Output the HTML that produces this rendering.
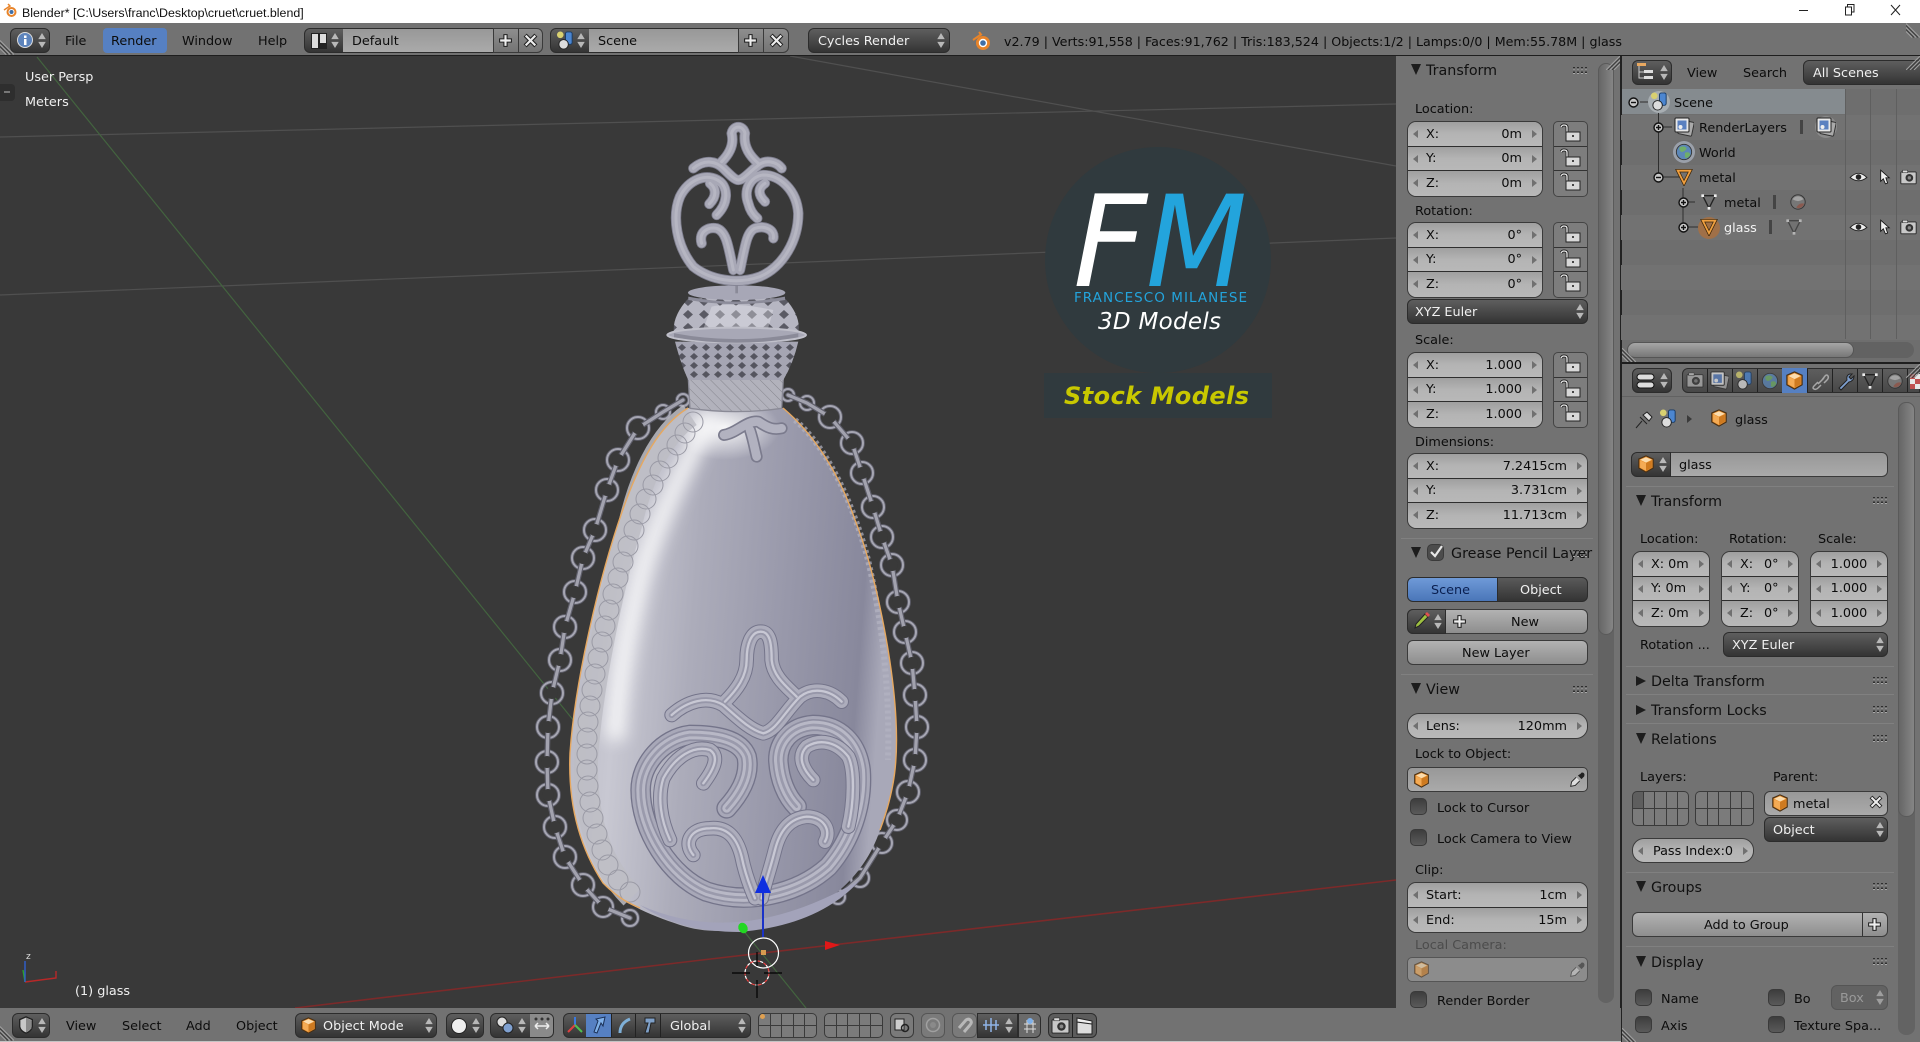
<!DOCTYPE html>
<html><head><meta charset="utf-8"><style>
html,body{margin:0;padding:0}
body{position:relative;width:1920px;height:1042px;overflow:hidden;background:#fff;font:12.8px/16px "DejaVu Sans","Liberation Sans",sans-serif;color:#0c0c0c}
div,svg,span.t{box-sizing:border-box}
.a{position:absolute}
.t{position:absolute;white-space:nowrap;line-height:16px;margin-top:1px}
.w{color:#f0f0f0}.h{font-size:14.3px;color:#111}
.hd{position:absolute;background:#727272}
.dk{position:absolute;height:25px;border:1px solid #2c2c2c;border-radius:6px;background:linear-gradient(#5e5e5e,#343434)}
.fl{position:absolute;height:25px;background:linear-gradient(#989898,#aaaaaa);border-top:1px solid #2c2c2c;border-bottom:1px solid #2c2c2c}
.bt{position:absolute;height:25px;border:1px solid #3a3a3a;border-radius:6px;background:linear-gradient(#b2b2b2,#8e8e8e)}
.num{position:absolute;border:1px solid #3a3a3a;border-radius:9px;overflow:hidden}
.r{position:relative;display:flex;justify-content:space-between;align-items:center;height:24.5px;padding:0 20px 0 18px;background:linear-gradient(#9f9f9f,#b4b4b4 50%,#b8b8b8);border-bottom:1px solid #2e2e2e}
.r span{position:relative;top:1px}
.r:last-child{border-bottom:0}
.r::before,.r::after{content:"";position:absolute;top:8px;border:4px solid transparent}
.r::before{left:5px;border-right:5px solid #707070;border-left:0}
.r::after{right:5px;border-left:5px solid #707070;border-right:0}
.p{padding:0 14px 0 18px;justify-content:flex-start}
.c{justify-content:center;padding:0}
.lk{position:absolute;left:1553px;width:35px;border:1px solid #444;border-radius:5px;overflow:hidden;background:#7d7d7d}
.lk div{height:24.5px;border-bottom:1px solid #333;position:relative}
.lk div:last-child{border:0}
.lk svg{position:absolute;left:6px;top:-1px;width:22px;height:22px}
.ck{position:absolute;width:17px;height:17px;border:1px solid #3a3a3a;border-radius:5px;background:linear-gradient(#3d3d3d,#5a5a5a)}
.d{position:absolute;width:0;height:0;border-left:5px solid transparent;border-right:5px solid transparent;border-top:11px solid #1c1c1c}
.rt{position:absolute;width:0;height:0;border-top:5px solid transparent;border-bottom:5px solid transparent;border-left:10px solid #1c1c1c}
.sep{position:absolute;height:1px;background:#5c5c5c;border-bottom:1px solid #808080}
.row{position:absolute;left:1621px;width:299px;height:25px}
.g{position:absolute;display:grid;grid-template-columns:repeat(5,1fr);grid-template-rows:1fr 1fr;border:1px solid #3a3a3a;border-radius:5px;overflow:hidden;background:#3a3a3a;gap:1px}
.g i{background:#7b7b7b;display:block}
svg.i{position:absolute;overflow:visible}
</style></head><body>
<svg width="0" height="0" style="position:absolute"><defs>
<symbol id="ud" viewBox="0 0 8 16"><path d="M4 0L8 6.5H0Z M4 16L8 9.5H0Z" fill="#b8b8b8"/></symbol>
<symbol id="lock" viewBox="0 0 22 22"><path d="M7 13V6.500Q7 4 4 4Q2 4 1 6" fill="none" stroke="#222" stroke-width="3"/><path d="M7 13V6.500Q7 4 4 4Q2 4 1 6" fill="none" stroke="#e8e8e8" stroke-width="1.300"/><rect x="6" y="11" width="14" height="9" fill="#d8d8d8" stroke="#222"/><rect x="12" y="14" width="2" height="2" fill="#444"/></symbol>
<symbol id="cube" viewBox="0 0 20 20"><path d="M10 1L18 4.500V14.500L10 19L2 14.500V4.500Z" fill="#e98f2c" stroke="#4a3014" stroke-width="1.300"/><path d="M10 2.500L16.500 5.300L10 8.500L3.500 5.300Z" fill="#fbdcae"/><path d="M10 9V17.500L16.500 14V6Z" fill="#ce7a20"/><path d="M3.500 6L10 9V17.500L3.500 14Z" fill="#f4ab55"/></symbol>
<symbol id="sc" viewBox="0 0 20 20"><circle cx="4.500" cy="4" r="3.500" fill="#d8d070"/><rect x="10" y="1" width="7" height="13" rx="2" fill="#4c86d0" stroke="#163a66"/><circle cx="8" cy="14" r="5" fill="#dcdcdc" stroke="#222"/></symbol>
<symbol id="rl" viewBox="0 0 20 20"><rect x="5" y="4" width="14" height="14" rx="1" fill="#aaa" stroke="#333" transform="rotate(12 12 11)"/><rect x="1" y="1" width="14" height="14" rx="1" fill="#e8e8e8" stroke="#222"/><rect x="3.500" y="3.500" width="9" height="9" fill="#5a80c0"/><circle cx="6.500" cy="10" r="2" fill="#eee"/></symbol>
<symbol id="world" viewBox="0 0 20 20"><circle cx="10" cy="10" r="8.500" fill="#5c87b8" stroke="#333"/><path d="M5 5Q10 2 13 6Q11 10 7 10Q4 8 5 5ZM11 11Q16 9 17 13Q14 18 11 16Z" fill="#6fae6a"/></symbol>
<symbol id="otri" viewBox="0 0 20 20"><path d="M3 3H17L10 17Z" fill="none" stroke="#3a2408" stroke-width="3.600"/><path d="M3 3H17L10 17Z" fill="none" stroke="#f0a040" stroke-width="2"/></symbol>
<symbol id="mesh" viewBox="0 0 20 20"><path d="M3 3H17L10 17Z" fill="none" stroke="#222" stroke-width="1.500"/><rect x="1.500" y="1.500" width="3" height="3" fill="#eee"/><rect x="15.500" y="1.500" width="3" height="3" fill="#eee"/><rect x="8.500" y="15.500" width="3" height="3" fill="#eee"/></symbol>
<symbol id="ball" viewBox="0 0 20 20"><circle cx="10" cy="10" r="8" fill="#777" stroke="#333"/><path d="M4 7A7 7 0 0 1 16 7Q10 11 4 7Z" fill="#a3a3a3"/><path d="M8 16Q12 10 17 12Q15 17 10 17Z" fill="#8a5a50"/></symbol>
<symbol id="eye" viewBox="0 0 20 14"><path d="M1 7Q10 -2 19 7Q10 14 1 7Z" fill="#eee" stroke="#222"/><circle cx="10" cy="6.500" r="3" fill="#222"/></symbol>
<symbol id="cur" viewBox="0 0 14 18"><path d="M2 1L12 10H8L10 16L7.500 17L5 11L2 14Z" fill="#f0f0f0" stroke="#111"/></symbol>
<symbol id="cam" viewBox="0 0 20 18"><rect x="1" y="3" width="18" height="14" rx="1" fill="#c8c8c8" stroke="#222"/><rect x="3" y="1" width="6" height="3" fill="#ddd" stroke="#222" stroke-width=".6"/><circle cx="11" cy="10" r="4.500" fill="#333"/><circle cx="11" cy="10" r="2" fill="#888"/></symbol>
<symbol id="plus" viewBox="0 0 14 14"><path d="M7 1V13M1 7H13" stroke="#222" stroke-width="4"/><path d="M7 2V12M2 7H12" stroke="#eee" stroke-width="2"/></symbol>
<symbol id="x" viewBox="0 0 14 14"><path d="M2 2L12 12M12 2L2 12" stroke="#222" stroke-width="4"/><path d="M2.500 2.500L11.500 11.500M11.500 2.500L2.500 11.500" stroke="#eee" stroke-width="2"/></symbol>
<symbol id="dots" viewBox="0 0 15 8"><path d="M0 1H15M0 5.500H15" stroke="#2e2e2e" stroke-width="2" stroke-dasharray="2 2"/><path d="M0 2H15M0 6.500H15" stroke="#a8a8a8" stroke-width="1" stroke-dasharray="2 2"/></symbol>
<symbol id="hatch" viewBox="0 0 14 14"><path d="M0 4L10 14M0 8L6 14M0 0L14 14" stroke="#a0a0a0" stroke-width="1"/><path d="M0 2L12 14M0 6L8 14" stroke="#3c3c3c" stroke-width="1"/></symbol>
<symbol id="drop" viewBox="0 0 20 20"><path d="M9 7L4 12L3 17L8 16L13 11" fill="#ddd" stroke="#222"/><path d="M11 5L15 9L18 6Q19 3 17 2Q15 1 14 3Z" fill="#222"/></symbol>
<symbol id="ed" viewBox="0 0 20 20"><path d="M10 1L17 4V12Q16 17 10 19Q4 17 3 12V4Z" fill="#c8c8c8" stroke="#222" stroke-width="1.500"/><path d="M10 2L10 18.500L16 14V5Z" fill="#8a8a8a"/></symbol>
<pattern id="lat1" width="16" height="13" patternUnits="userSpaceOnUse" patternTransform="scale(3)"><rect width="16" height="13" fill="#b6b6c2"/><path d="M8 2L13 6.500L8 11L3 6.500Z" fill="#5a5a64"/></pattern>
<pattern id="lat2" width="12" height="9" patternUnits="userSpaceOnUse" patternTransform="scale(3)"><rect width="12" height="9" fill="#a5a5b3"/><path d="M6 1L10 4.500L6 8L2 4.500Z" fill="#55555f"/></pattern>
<pattern id="lat3" width="7" height="7" patternUnits="userSpaceOnUse" patternTransform="rotate(45) scale(3)"><rect width="7" height="7" fill="#b2b2bc"/><path d="M0 0H7" stroke="#86868f"/></pattern>
<linearGradient id="body" x1="0" x2="1" y1="0" y2=".12"><stop offset="0" stop-color="#b5b5c0"/><stop offset=".2" stop-color="#c8c8d2"/><stop offset=".42" stop-color="#acacba"/><stop offset=".7" stop-color="#9898aa"/><stop offset=".93" stop-color="#88889c"/><stop offset="1" stop-color="#a8a8b8"/></linearGradient>
<radialGradient id="sh"><stop offset="0" stop-color="#fff" stop-opacity=".9"/><stop offset="1" stop-color="#fff" stop-opacity="0"/></radialGradient>
<filter id="b8" x="-50%" y="-20%" width="200%" height="140%"><feGaussianBlur stdDeviation="8"/></filter>
<g id="chL"><circle cx="683" cy="400" r="6"/><circle cx="663" cy="412" r="7"/><circle cx="638" cy="428" r="11"/><circle cx="618" cy="460" r="11"/><circle cx="607" cy="490" r="11"/><circle cx="595" cy="530" r="11"/><circle cx="583" cy="558" r="11"/><circle cx="575" cy="592" r="11"/><circle cx="565" cy="627" r="11"/><circle cx="560" cy="660" r="11"/><circle cx="552" cy="693" r="11"/><circle cx="548" cy="727" r="11"/><circle cx="547" cy="762" r="11"/><circle cx="548" cy="795" r="11"/><circle cx="555" cy="827" r="11"/><circle cx="565" cy="857" r="11"/><circle cx="583" cy="885" r="11"/><circle cx="603" cy="907" r="10"/><circle cx="630" cy="918" r="8"/></g>
<g id="chR"><circle cx="788" cy="395" r="6"/><circle cx="807" cy="403" r="7"/><circle cx="830" cy="417" r="11"/><circle cx="852" cy="443" r="11"/><circle cx="862" cy="473" r="11"/><circle cx="873" cy="507" r="11"/><circle cx="882" cy="537" r="11"/><circle cx="892" cy="565" r="11"/><circle cx="898" cy="602" r="11"/><circle cx="905" cy="632" r="11"/><circle cx="912" cy="663" r="11"/><circle cx="915" cy="695" r="11"/><circle cx="917" cy="727" r="11"/><circle cx="915" cy="760" r="11"/><circle cx="908" cy="792" r="11"/><circle cx="897" cy="820" r="10"/><circle cx="882" cy="843" r="10"/><circle cx="860" cy="878" r="9"/><circle cx="838" cy="897" r="7"/></g>
<g id="inn"><circle cx="638" cy="428" r="6"/><circle cx="618" cy="460" r="6"/><circle cx="607" cy="490" r="6"/><circle cx="595" cy="530" r="6"/><circle cx="583" cy="558" r="6"/><circle cx="575" cy="592" r="6"/><circle cx="565" cy="627" r="6"/><circle cx="560" cy="660" r="6"/><circle cx="552" cy="693" r="6"/><circle cx="548" cy="727" r="6"/><circle cx="547" cy="762" r="6"/><circle cx="548" cy="795" r="6"/><circle cx="555" cy="827" r="6"/><circle cx="565" cy="857" r="6"/><circle cx="583" cy="885" r="6"/><circle cx="603" cy="907" r="6"/><circle cx="830" cy="417" r="6"/><circle cx="852" cy="443" r="6"/><circle cx="862" cy="473" r="6"/><circle cx="873" cy="507" r="6"/><circle cx="882" cy="537" r="6"/><circle cx="892" cy="565" r="6"/><circle cx="898" cy="602" r="6"/><circle cx="905" cy="632" r="6"/><circle cx="912" cy="663" r="6"/><circle cx="915" cy="695" r="6"/><circle cx="917" cy="727" r="6"/><circle cx="915" cy="760" r="6"/><circle cx="908" cy="792" r="6"/><circle cx="897" cy="820" r="6"/><circle cx="882" cy="843" r="6"/></g>
<g id="orn"><path d="M615 545C650 510 680 470 680 420C680 370 695 335 722 335C750 335 755 370 755 420C760 470 800 500 830 530"/><path d="M455 585C500 545 560 525 610 555C650 590 690 630 730 640C770 630 790 580 840 530C880 500 930 510 965 545"/><path d="M520 1005C490 970 510 925 570 925C620 920 650 950 665 1010C675 1060 690 1100 705 1135"/><path d="M915 965C935 930 910 890 860 890C810 895 780 930 765 990C750 1050 735 1090 725 1135"/><path d="M550 790C580 750 600 710 570 690C520 675 465 710 430 775C412 830 422 900 450 960"/><path d="M880 780C850 750 830 710 860 680C900 655 950 665 985 710C1005 750 1002 850 985 920"/></g>
<path id="ring" d="M620 865C670 810 690 760 680 710C660 655 580 645 510 645C430 655 362 730 362 810C362 930 450 1070 560 1115C680 1155 830 1125 925 1040C990 965 1030 860 1022 750C1012 670 960 615 880 615C810 620 775 670 775 720C778 780 800 830 830 860"/>
<g id="st"><path d="M590 345C625 310 625 265 600 245C560 215 505 240 480 290C455 350 470 440 520 500C570 540 650 555 720 530C790 500 835 420 835 340C830 270 780 225 730 225C690 230 670 270 685 310C690 330 700 345 712 355"/><path d="M568 312C590 290 590 265 570 250"/><path d="M735 305C715 285 712 265 735 250"/><path d="M605 185C640 150 640 120 635 100C640 75 670 75 675 100C670 130 680 160 715 190"/><path d="M520 205C555 175 590 185 610 205C630 225 645 240 655 240C670 240 690 215 710 200C735 175 770 185 785 205"/><path d="M545 430C535 395 565 380 590 385C620 395 625 440 640 510"/><path d="M760 415C765 390 735 375 705 385C680 395 675 440 660 510"/></g>
</defs></svg>

<!-- title bar -->
<svg class="i" style="left:3px;top:3px" width="15" height="15" viewBox="0 0 15 15"><circle cx="8.500" cy="9" r="5" fill="#e8842a"/><circle cx="8.500" cy="9" r="2.500" fill="#3f6fa8" stroke="#fff"/><path d="M1 7L7 3L5 1" fill="none" stroke="#e8842a" stroke-width="1.500"/></svg>
<span class="t" style="left:22px;top:4px;font:12.400px/16px 'Liberation Sans',sans-serif;color:#111">Blender* [C:\Users\franc\Desktop\cruet\cruet.blend]</span>
<div class="a" style="left:1799px;top:10px;width:9px;height:1px;background:#222"></div>
<svg class="i" style="left:1845px;top:4px" width="10" height="12"><rect x=".5" y="3" width="6" height="8" fill="#fff" stroke="#222"/><path d="M2.500 3V.5H9V8H6.500" fill="none" stroke="#222"/></svg>
<svg class="i" style="left:1890px;top:5px" width="11" height="11"><path d="M1 0L10 10M10 0L1 10" stroke="#222"/></svg>

<!-- viewport -->
<div class="a" style="left:0;top:55px;width:1396px;height:953px;background:#393939"></div>
<svg class="a" style="left:0;top:0" width="1396" height="1008" viewBox="0 0 1396 1008">
<g fill="none" stroke-width="1.200">
<path d="M0 137L1396 104" stroke="#505050"/><path d="M0 295L1396 238" stroke="#505050"/><path d="M790 56L1396 166" stroke="#505050"/>
<path d="M37 57L806 1008" stroke="#43643f"/><path d="M295 1008L702 960L1396 880" stroke="#7c2a2a" stroke-width="1.600"/>
</g>
<!-- chains -->
<use href="#chL" fill="none" stroke="#5e5e6a" stroke-width="3.800"/><use href="#chR" fill="none" stroke="#5e5e6a" stroke-width="3.800"/>
<use href="#chL" fill="none" stroke="#a6a6b2" stroke-width="2"/><use href="#chR" fill="none" stroke="#a6a6b2" stroke-width="2"/>
<g fill="none" stroke-linecap="round">
<path d="M683 400L663 412L638 428L618 460L607 490L595 530L583 558L575 592L565 627L560 660L552 693L548 727L547 762L548 795L555 827L565 857L583 885L603 907L630 918" stroke="#5e5e6a" stroke-width="5.500"/>
<path d="M788 395L807 403L830 417L852 443L862 473L873 507L882 537L892 565L898 602L905 632L912 663L915 695L917 727L915 760L908 792L897 820L882 843L860 878L838 897" stroke="#5e5e6a" stroke-width="5.500"/>
<path d="M683 400L663 412L638 428L618 460L607 490L595 530L583 558L575 592L565 627L560 660L552 693L548 727L547 762L548 795L555 827L565 857L583 885L603 907L630 918" stroke="#a2a2ae" stroke-width="3.200"/>
<path d="M788 395L807 403L830 417L852 443L862 473L873 507L882 537L892 565L898 602L905 632L912 663L915 695L917 727L915 760L908 792L897 820L882 843L860 878L838 897" stroke="#a2a2ae" stroke-width="3.200"/>
</g>
<use href="#inn" fill="#393939"/>
<!-- body -->
<path d="M688 408C660 425 640 460 622 512C600 575 575 680 570 753C568 800 578 845 603 883C625 905 650 915 680 925C710 935 745 932 787 920C830 905 865 875 880 830C895 790 898 760 896 720C893 660 875 570 855 520C840 475 815 435 783 408Z" fill="url(#body)"/>
<path d="M712 415C680 470 650 540 640 580C628 630 618 680 615 740" fill="none" stroke="#fff" stroke-width="20" opacity=".8" filter="url(#b8)"/>
<ellipse cx="725" cy="428" rx="55" ry="32" fill="url(#sh)"/>
<path d="M640 905Q740 950 860 880Q820 925 740 932Q680 932 640 905Z" fill="#a3a3ba"/>
<path d="M690 415C660 435 640 480 630 525C612 585 590 690 586 760C585 810 595 860 632 897" fill="none" stroke="#bdbdc4" stroke-width="24" opacity=".85"/>
<g fill="none" stroke="#9a9aa5" stroke-width="1">
<circle cx="693" cy="422" r="10"/><circle cx="685" cy="433" r="10"/><circle cx="677" cy="445" r="10"/><circle cx="668" cy="458" r="10"/><circle cx="660" cy="471" r="10"/><circle cx="653" cy="485" r="10"/><circle cx="646" cy="499" r="10"/><circle cx="640" cy="514" r="10"/><circle cx="634" cy="530" r="10"/><circle cx="628" cy="546" r="10"/><circle cx="623" cy="562" r="10"/><circle cx="618" cy="578" r="10"/><circle cx="613" cy="594" r="10"/><circle cx="609" cy="610" r="10"/><circle cx="605" cy="626" r="10"/><circle cx="602" cy="642" r="10"/><circle cx="598" cy="658" r="10"/><circle cx="595" cy="674" r="10"/><circle cx="592" cy="690" r="10"/><circle cx="590" cy="706" r="10"/><circle cx="588" cy="722" r="10"/><circle cx="587" cy="738" r="10"/><circle cx="587" cy="754" r="10"/><circle cx="587" cy="770" r="10"/><circle cx="588" cy="786" r="10"/><circle cx="590" cy="802" r="10"/><circle cx="593" cy="818" r="10"/><circle cx="597" cy="834" r="10"/><circle cx="602" cy="850" r="10"/><circle cx="608" cy="865" r="10"/><circle cx="618" cy="880" r="10"/><circle cx="630" cy="892" r="10"/>
</g>
<path d="M795 420C830 450 855 510 868 560C882 620 890 690 888 760" fill="none" stroke="#b4b4c2" stroke-width="6" stroke-dasharray="3 3" opacity=".7"/>
<path d="M688 408C660 425 640 460 622 512C600 575 575 680 570 753C568 800 578 845 603 883C615 895 625 902 640 908" fill="none" stroke="#e6a860" stroke-width="1.400"/>
<path d="M783 408C815 435 840 475 855 520C875 570 893 660 896 720C898 760 895 790 880 830" fill="none" stroke="#e6a860" stroke-width="1.400"/>
<!-- ornament -->
<g transform="translate(520 520) scale(.3333)" fill="none" stroke-linecap="round" stroke-linejoin="round">
<use href="#ring" stroke="#74748a" stroke-width="62"/><use href="#ring" stroke="#a8a8b8" stroke-width="54"/><use href="#ring" stroke="#8f8fa2" stroke-width="36"/><use href="#ring" stroke="#b8b8c6" stroke-width="26"/><use href="#ring" stroke="#9a9aac" stroke-width="8"/>
<use href="#orn" stroke="#74748a" stroke-width="44"/><use href="#orn" stroke="#adadbc" stroke-width="38"/><use href="#orn" stroke="#9797a9" stroke-width="18"/><use href="#orn" stroke="#c8c8d4" stroke-width="7"/>
</g>
<!-- neck collar -->
<g transform="translate(520 100) scale(.3333)">
<path d="M505 835H790L785 925Q650 945 510 925Z" fill="url(#lat3)" stroke="#8a8a96" stroke-width="4"/>
<path d="M465 725Q485 800 505 840H790Q820 790 835 725Z" fill="url(#lat2)"/>
<path d="M505 595Q455 650 462 700H835Q845 650 795 595Z" fill="url(#lat1)"/>
<path d="M575 620Q640 605 760 630L740 700L545 700Z" fill="#f0f0f6" opacity=".35"/>
<ellipse cx="650" cy="705" rx="208" ry="22" fill="#a8a8b6" stroke="#c0c0ca" stroke-width="6"/>
<path d="M462 712Q650 745 835 712L835 700Q650 735 462 700Z" fill="#8a8a98"/>
<ellipse cx="650" cy="578" rx="146" ry="22" fill="#a7a7b6"/>
<path d="M505 590Q650 620 795 590V600Q650 625 505 600Z" fill="#8c8c9a"/>
<rect x="646" y="545" width="8" height="35" fill="#8a8a98"/>
</g>
<!-- stopper -->
<g transform="translate(520 100) scale(.3333)" fill="none" stroke-linecap="round" stroke-linejoin="round">
<use href="#st" stroke="#7e7e8e" stroke-width="31"/><use href="#st" stroke="#a8a8b6" stroke-width="26"/><use href="#st" stroke="#b6b6c2" stroke-width="9"/>
</g>
<!-- neck ornament on body -->
<g transform="translate(520 100) scale(.3333)" fill="none" stroke-linecap="round" stroke-linejoin="round">
<path d="M612 1005C650 1000 680 960 715 965C745 985 760 990 785 985M690 990C700 1020 705 1050 710 1070" stroke="#7b7b8d" stroke-width="36"/>
<path d="M612 1005C650 1000 680 960 715 965C745 985 760 990 785 985M690 990C700 1020 705 1050 710 1070" stroke="#b2b2c0" stroke-width="26"/>
</g>
<!-- gizmo -->
<path d="M763 937V890" stroke="#1a32c8" stroke-width="2"/><path d="M763 875L771 893H755Z" fill="#0f2ee0"/>
<path d="M825 941L840 945L825 950Z" fill="#e01818"/>
<ellipse cx="743" cy="928" rx="4.500" ry="5.500" fill="#22d822" transform="rotate(-30 743 928)"/>
<circle cx="763.500" cy="953" r="15" fill="none" stroke="#fff" stroke-width="1.200"/><rect x="761" y="950" width="5" height="5" fill="#d89a50"/>
<circle cx="757" cy="973" r="12" fill="none" stroke="#e44" stroke-width="1.200" stroke-dasharray="4 3"/>
<circle cx="757" cy="973" r="12" fill="none" stroke="#fff" stroke-width="1.200" stroke-dasharray="3 4" stroke-dashoffset="3.500"/>
<path d="M732 973H750M764 973H782M757 952V966M757 980V998" stroke="#000" stroke-width="1.200"/>
<!-- mini axis -->
<path d="M25 982L56 978V971" fill="none" stroke="#b82828" stroke-width="1.400"/><path d="M25 982L23 970" stroke="#2ca02c" stroke-width="1.400"/><path d="M25 982V961" stroke="#3060d0" stroke-width="1.400"/>
<!-- logo -->
<circle cx="1158" cy="260" r="113" fill="#303a3e"/>
<rect x="1044" y="373" width="228" height="45" fill="#303a3e"/>
<text x="1073" y="286" font-family="DejaVu Sans" font-style="italic" font-size="127" fill="#fff" textLength="74" lengthAdjust="spacingAndGlyphs">F</text>
<text x="1146" y="286" font-family="DejaVu Sans" font-style="italic" font-size="127" fill="#23a4dc" textLength="101" lengthAdjust="spacingAndGlyphs">M</text>
<text x="1074" y="302" font-family="DejaVu Sans" font-size="13.500" fill="#23a4dc" textLength="173">FRANCESCO MILANESE</text>
<text x="1098" y="329" font-family="DejaVu Sans" font-style="italic" font-size="23" fill="#fff" textLength="123">3D Models</text>
<text x="1064" y="404" font-family="DejaVu Sans" font-style="italic" font-weight="bold" font-size="24" fill="#c8c800" textLength="185">Stock Models</text>
</svg>
<span class="t w" style="left:25px;top:69px">User Persp</span>
<span class="t w" style="left:25px;top:94px">Meters</span>
<span class="t w" style="left:75px;top:983px">(1) glass</span>
<span class="t" style="left:26px;top:948px;font-size:9px;color:#ddd">z</span>
<div class="a" style="left:0;top:84px;width:15px;height:17px;background:#2e2e2e;border-radius:0 4px 4px 0"></div>
<div class="a" style="left:4px;top:91px;width:6px;height:2px;background:#777"></div>

<!-- top header -->
<div class="hd" style="left:0;top:23px;width:1920px;height:32px"></div>
<div class="a" style="left:0;top:55px;width:1920px;height:1px;background:#1e1e1e"></div>
<svg class="i" style="left:0;top:40px" width="14" height="15"><use href="#hatch"/></svg>
<svg class="i" style="left:1906px;top:23px" width="14" height="15"><use href="#hatch"/></svg>
<div class="dk" style="left:10px;top:28px;width:40px"></div>
<svg class="i" style="left:16px;top:31px" width="18" height="18"><circle cx="9" cy="9" r="7.500" fill="#5d84bc" stroke="#ddd"/><rect x="8" y="8" width="2.500" height="6" fill="#fff"/><rect x="8" y="4.500" width="2.500" height="2.500" fill="#fff"/></svg>
<svg class="i" style="left:38px;top:33px" width="8" height="15"><use href="#ud"/></svg>
<span class="t" style="left:65px;top:33px">File</span>
<div class="a" style="left:103px;top:28px;width:64px;height:25px;background:#5680c2;border-radius:4px"></div>
<span class="t" style="left:111px;top:33px">Render</span>
<span class="t" style="left:182px;top:33px">Window</span>
<span class="t" style="left:258px;top:33px">Help</span>

<div class="dk" style="left:304px;top:28px;width:46px;border-radius:6px 0 0 6px"></div>
<div class="fl" style="left:343px;top:28px;width:150px"></div>
<span class="t" style="left:352px;top:33px">Default</span>
<div class="bt" style="left:493px;top:28px;width:26px;border-radius:0;background:linear-gradient(#8e8e8e,#747474)"></div>
<div class="bt" style="left:518px;top:28px;width:25px;border-radius:0 6px 6px 0;background:linear-gradient(#8e8e8e,#747474)"></div>
<svg class="i" style="left:310px;top:32px" width="18" height="18"><rect x="1" y="1" width="16" height="16" fill="#222"/><rect x="2" y="2" width="6" height="14" fill="#ddd"/><rect x="10" y="2" width="6" height="9" fill="#ddd"/></svg>
<svg class="i" style="left:331px;top:33px" width="8" height="15"><use href="#ud"/></svg>
<svg class="i" style="left:498px;top:33px" width="15" height="15"><use href="#plus"/></svg>
<svg class="i" style="left:523px;top:33px" width="15" height="15"><use href="#x"/></svg>

<div class="dk" style="left:550px;top:28px;width:46px;border-radius:6px 0 0 6px"></div>
<div class="fl" style="left:589px;top:28px;width:149px"></div>
<span class="t" style="left:598px;top:33px">Scene</span>
<div class="bt" style="left:738px;top:28px;width:26px;border-radius:0;background:linear-gradient(#8e8e8e,#747474)"></div>
<div class="bt" style="left:763px;top:28px;width:26px;border-radius:0 6px 6px 0;background:linear-gradient(#8e8e8e,#747474)"></div>
<svg class="i" style="left:556px;top:31px" width="19" height="19"><use href="#sc"/></svg>
<svg class="i" style="left:577px;top:33px" width="8" height="15"><use href="#ud"/></svg>
<svg class="i" style="left:743px;top:33px" width="15" height="15"><use href="#plus"/></svg>
<svg class="i" style="left:769px;top:33px" width="15" height="15"><use href="#x"/></svg>

<div class="dk" style="left:808px;top:28px;width:142px"></div>
<span class="t w" style="left:818px;top:33px">Cycles Render</span>
<svg class="i" style="left:937px;top:33px" width="8" height="15"><use href="#ud"/></svg>
<svg class="i" style="left:972px;top:31px" width="20" height="20" viewBox="0 0 20 20"><circle cx="11" cy="12" r="7" fill="#e8842a"/><circle cx="11" cy="12" r="3.500" fill="#3f6fa8" stroke="#fff" stroke-width="1.400"/><path d="M1 9L9 3.500L7 1" fill="none" stroke="#e8842a" stroke-width="2"/></svg>
<span class="t" style="left:1004px;top:33px;font-size:12.660px">v2.79 | Verts:91,558 | Faces:91,762 | Tris:183,524 | Objects:1/2 | Lamps:0/0 | Mem:55.78M | glass</span>

<!-- N panel -->
<div class="a" style="left:1396px;top:56px;width:225px;height:952px;background:#727272"></div>
<div class="a" style="left:1598px;top:63px;width:16px;height:940px;background:#636363;border-radius:8px"></div>
<div class="a" style="left:1598px;top:63px;width:16px;height:572px;background:linear-gradient(90deg,#666,#858585);border-radius:8px;border:1px solid #5a5a5a"></div>
<div class="a" style="left:1620px;top:56px;width:2px;height:986px;background:#222"></div>
<svg class="i" style="left:1606px;top:56px" width="14" height="14"><use href="#hatch" transform="scale(-1 1) translate(-14 0)"/></svg>
<div class="d" style="left:1411px;top:64px"></div>
<span class="t h" style="left:1426px;top:62px">Transform</span>
<svg class="i" style="left:1573px;top:67px" width="15" height="8"><use href="#dots"/></svg>

<span class="t" style="left:1415px;top:101px">Location:</span>
<div class="num" style="left:1407px;top:121px;width:136px"><div class="r"><span>X:</span><span>0m</span></div><div class="r"><span>Y:</span><span>0m</span></div><div class="r"><span>Z:</span><span>0m</span></div></div>
<div class="lk" style="top:121px"><div><svg><use href="#lock"/></svg></div><div><svg><use href="#lock"/></svg></div><div><svg><use href="#lock"/></svg></div></div>
<span class="t" style="left:1415px;top:203px">Rotation:</span>
<div class="num" style="left:1407px;top:222px;width:136px"><div class="r"><span>X:</span><span>0°</span></div><div class="r"><span>Y:</span><span>0°</span></div><div class="r"><span>Z:</span><span>0°</span></div></div>
<div class="lk" style="top:222px"><div><svg><use href="#lock"/></svg></div><div><svg><use href="#lock"/></svg></div><div><svg><use href="#lock"/></svg></div></div>
<div class="dk" style="left:1407px;top:299px;width:181px"></div>
<span class="t w" style="left:1415px;top:304px">XYZ Euler</span>
<svg class="i" style="left:1576px;top:304px" width="8" height="15"><use href="#ud"/></svg>
<span class="t" style="left:1415px;top:332px">Scale:</span>
<div class="num" style="left:1407px;top:352px;width:136px"><div class="r"><span>X:</span><span>1.000</span></div><div class="r"><span>Y:</span><span>1.000</span></div><div class="r"><span>Z:</span><span>1.000</span></div></div>
<div class="lk" style="top:352px"><div><svg><use href="#lock"/></svg></div><div><svg><use href="#lock"/></svg></div><div><svg><use href="#lock"/></svg></div></div>
<span class="t" style="left:1415px;top:434px">Dimensions:</span>
<div class="num" style="left:1407px;top:453px;width:181px"><div class="r"><span>X:</span><span>7.2415cm</span></div><div class="r"><span>Y:</span><span>3.731cm</span></div><div class="r"><span>Z:</span><span>11.713cm</span></div></div>
<div class="sep" style="left:1401px;top:538px;width:192px"></div>

<div class="d" style="left:1411px;top:547px"></div>
<div class="ck" style="left:1427px;top:544px;background:#4c4c4c"></div>
<svg class="i" style="left:1429px;top:544px" width="15" height="15"><path d="M2 8L6 12L13 2" fill="none" stroke="#e8e8e8" stroke-width="2.200"/></svg>
<span class="t h" style="left:1451px;top:545px">Grease Pencil Layer</span>
<svg class="i" style="left:1573px;top:550px" width="15" height="8"><use href="#dots"/></svg>

<div class="a" style="left:1407px;top:577px;width:91px;height:25px;background:linear-gradient(#6f9ad8,#4a76b8);border:1px solid #2c2c2c;border-radius:6px 0 0 6px"></div>
<div class="a" style="left:1497px;top:577px;width:91px;height:25px;background:linear-gradient(#5a5a5a,#343434);border:1px solid #2c2c2c;border-radius:0 6px 6px 0"></div>
<span class="t" style="left:1431px;top:582px;color:#0a1f50">Scene</span>
<span class="t w" style="left:1520px;top:582px">Object</span>
<div class="bt" style="left:1407px;top:609px;width:181px"></div>
<div class="dk" style="left:1407px;top:609px;width:39px;border-radius:6px 0 0 6px"></div>
<svg class="i" style="left:1412px;top:611px" width="20" height="20" viewBox="0 0 20 20"><path d="M3 17L4 13L13 3L16 6L7 15Z" fill="#9ec040" stroke="#222"/><path d="M13 3L15 1L18 4L16 6Z" fill="#e05050"/></svg>
<svg class="i" style="left:1434px;top:614px" width="8" height="15"><use href="#ud"/></svg>
<svg class="i" style="left:1452px;top:614px" width="15" height="15"><use href="#plus"/></svg>
<span class="t" style="left:1511px;top:614px">New</span>
<div class="bt" style="left:1407px;top:640px;width:181px"></div>
<span class="t" style="left:1462px;top:645px">New Layer</span>
<div class="sep" style="left:1401px;top:674px;width:192px"></div>
<div class="d" style="left:1411px;top:683px"></div>
<span class="t h" style="left:1426px;top:681px">View</span>
<svg class="i" style="left:1573px;top:686px" width="15" height="8"><use href="#dots"/></svg>
<div class="num" style="left:1407px;top:713px;width:181px;border-radius:12px"><div class="r" style="height:24px"><span>Lens:</span><span>120mm</span></div></div>
<span class="t" style="left:1415px;top:746px">Lock to Object:</span>
<div class="fl" style="left:1407px;top:767px;width:181px;border:1px solid #3a3a3a;border-radius:5px"></div>
<svg class="i" style="left:1413px;top:771px" width="17" height="17"><use href="#cube"/></svg>
<svg class="i" style="left:1568px;top:771px" width="18" height="18"><use href="#drop"/></svg>
<div class="ck" style="left:1410px;top:798px"></div>
<span class="t" style="left:1437px;top:800px">Lock to Cursor</span>
<div class="ck" style="left:1410px;top:829px"></div>
<span class="t" style="left:1437px;top:831px">Lock Camera to View</span>
<span class="t" style="left:1415px;top:862px">Clip:</span>
<div class="num" style="left:1407px;top:882px;width:181px"><div class="r"><span>Start:</span><span>1cm</span></div><div class="r"><span>End:</span><span>15m</span></div></div>
<span class="t" style="left:1415px;top:937px;color:#4c4c4c">Local Camera:</span>
<div class="fl" style="left:1407px;top:957px;width:181px;border:1px solid #555;border-radius:5px;background:#8c8c8c"></div>
<svg class="i" style="left:1413px;top:961px;opacity:.6" width="17" height="17"><use href="#cube"/></svg>
<svg class="i" style="left:1568px;top:961px;opacity:.5" width="18" height="18"><use href="#drop"/></svg>
<div class="ck" style="left:1410px;top:991px"></div>
<span class="t" style="left:1437px;top:993px">Render Border</span>

<!-- bottom header -->
<div class="hd" style="left:0;top:1008px;width:1621px;height:34px"></div>
<div class="a" style="left:0;top:1041px;width:1621px;height:1px;background:#c4c4c4"></div>
<svg class="i" style="left:0;top:1026px" width="14" height="15"><use href="#hatch"/></svg>
<div class="dk" style="left:12px;top:1013px;width:38px"></div>
<svg class="i" style="left:17px;top:1016px" width="18" height="18"><use href="#ed"/></svg>
<svg class="i" style="left:38px;top:1018px" width="8" height="15"><use href="#ud"/></svg>
<span class="t" style="left:66px;top:1018px">View</span>
<span class="t" style="left:122px;top:1018px">Select</span>
<span class="t" style="left:186px;top:1018px">Add</span>
<span class="t" style="left:236px;top:1018px">Object</span>
<div class="dk" style="left:295px;top:1013px;width:142px"></div>
<svg class="i" style="left:300px;top:1017px" width="17" height="17"><use href="#cube"/></svg>
<span class="t w" style="left:323px;top:1018px">Object Mode</span>
<svg class="i" style="left:425px;top:1018px" width="8" height="15"><use href="#ud"/></svg>
<div class="dk" style="left:446px;top:1013px;width:38px"></div>
<svg class="i" style="left:450px;top:1017px" width="18" height="18"><circle cx="9" cy="9" r="7.500" fill="#eee" stroke="#222"/></svg>
<svg class="i" style="left:472px;top:1018px" width="8" height="15"><use href="#ud"/></svg>
<div class="dk" style="left:490px;top:1013px;width:64px"></div>
<div class="a" style="left:530px;top:1014px;width:23px;height:23px;background:#8a8a8a;border-radius:0 5px 5px 0"></div>
<svg class="i" style="left:496px;top:1016px" width="18" height="18"><circle cx="6" cy="6" r="5" fill="#ddd" stroke="#222"/><circle cx="12" cy="12" r="5" fill="#7fa0d0" stroke="#222"/></svg>
<svg class="i" style="left:518px;top:1018px" width="8" height="15"><use href="#ud"/></svg>
<svg class="i" style="left:533px;top:1016px" width="18" height="18"><path d="M2 10H16M2 10L5 7M2 10L5 13M16 10L13 7M16 10L13 13" fill="none" stroke="#eee" stroke-width="1.500"/><circle cx="3" cy="3" r="1.500" fill="#333"/><circle cx="9" cy="3" r="1.500" fill="#333"/><circle cx="15" cy="3" r="1.500" fill="#333"/></svg>
<div class="dk" style="left:563px;top:1013px;width:188px"></div>
<div class="a" style="left:586px;top:1014px;width:25px;height:23px;background:#5680c2"></div>
<div class="a" style="left:611px;top:1014px;width:1px;height:23px;background:#222"></div><div class="a" style="left:635px;top:1014px;width:1px;height:23px;background:#222"></div><div class="a" style="left:660px;top:1014px;width:1px;height:23px;background:#222"></div>
<svg class="i" style="left:565px;top:1015px" width="20" height="20"><path d="M10 10L10 2" stroke="#3a7ae0" stroke-width="2"/><path d="M10 10L3 17" stroke="#e04040" stroke-width="2"/><path d="M10 10L17 17" stroke="#50c050" stroke-width="2"/></svg>
<svg class="i" style="left:589px;top:1015px" width="20" height="20"><path d="M5 17L9 6L7 4L16 2L14 11L12 8L8 18Z" fill="#7fb0e8" stroke="#1a2f55"/></svg>
<svg class="i" style="left:614px;top:1015px" width="20" height="20"><path d="M6 18Q6 8 16 4" fill="none" stroke="#7fb0d8" stroke-width="3"/></svg>
<svg class="i" style="left:639px;top:1015px" width="20" height="20"><path d="M6 18L9 8H6V3H16V8H12L10 18Z" fill="#7fa0c8" stroke="#222"/></svg>
<span class="t w" style="left:670px;top:1018px">Global</span>
<svg class="i" style="left:738px;top:1018px" width="8" height="15"><use href="#ud"/></svg>
<div class="g" style="left:758px;top:1013px;width:59px;height:25px"><i></i><i></i><i></i><i></i><i></i><i></i><i></i><i></i><i></i><i></i></div>
<div class="a" style="left:760px;top:1014px;width:5px;height:5px;background:#e0a050;border-radius:50%"></div>
<div class="g" style="left:824px;top:1013px;width:59px;height:25px"><i></i><i></i><i></i><i></i><i></i><i></i><i></i><i></i><i></i><i></i></div>
<div class="bt" style="left:890px;top:1013px;width:24px;background:#7a7a7a"></div>
<svg class="i" style="left:894px;top:1017px" width="16" height="17"><rect x="1" y="2" width="9" height="11" fill="#ccc" stroke="#222"/><circle cx="11" cy="11" r="3.500" fill="none" stroke="#222" stroke-width="1.500"/></svg>
<div class="bt" style="left:921px;top:1013px;width:24px;background:#7a7a7a;border-color:#555"></div>
<svg class="i" style="left:925px;top:1017px" width="16" height="16"><circle cx="8" cy="8" r="6.500" fill="none" stroke="#a0a0a0" stroke-width="1.500"/><circle cx="8" cy="8" r="3" fill="#8a8a8a"/></svg>
<div class="bt" style="left:952px;top:1013px;width:25px;background:#7a7a7a;border-color:#555"></div>
<svg class="i" style="left:956px;top:1017px" width="17" height="17"><path d="M3 11L10 3Q13 1 15 4Q16 6 14 8L8 15" fill="none" stroke="#b8b8b8" stroke-width="3"/></svg>
<div class="dk" style="left:977px;top:1013px;width:41px;border-radius:0"></div>
<svg class="i" style="left:981px;top:1017px" width="20" height="16"><path d="M2 8H18M10 1V15M5 3V13M15 3V13" stroke="#8fb4e8" stroke-width="1.500"/></svg>
<svg class="i" style="left:1005px;top:1018px" width="8" height="15"><use href="#ud"/></svg>
<div class="dk" style="left:1018px;top:1013px;width:23px;border-radius:0 6px 6px 0;background:#6a6a6a"></div>
<svg class="i" style="left:1021px;top:1016px" width="18" height="18"><path d="M3 8H15M3 13H15M6 4V17M12 4V17" stroke="#ddd"/><circle cx="9" cy="5" r="3" fill="#7fb0e8"/></svg>
<div class="dk" style="left:1048px;top:1013px;width:49px;background:#5c5c5c"></div>
<div class="a" style="left:1072px;top:1014px;width:1px;height:23px;background:#222"></div>
<svg class="i" style="left:1051px;top:1017px" width="19" height="17"><use href="#cam"/></svg>
<svg class="i" style="left:1075px;top:1016px" width="19" height="19"><rect x="2" y="6" width="15" height="12" fill="#ddd" stroke="#222"/><path d="M2 2L17 5V8L2 6Z" fill="#eee" stroke="#222"/></svg>

<!-- outliner -->
<div class="a" style="left:1622px;top:56px;width:298px;height:33px;background:#727272"></div>
<div class="a" style="left:1622px;top:89px;width:298px;height:274px;background:#6e6e6e"></div>
<div class="row" style="top:115px;background:#727272"></div><div class="row" style="top:165px;background:#727272"></div><div class="row" style="top:215px;background:#727272"></div><div class="row" style="top:265px;background:#727272"></div><div class="row" style="top:315px;background:#727272"></div>
<div class="a" style="left:1622px;top:89px;width:223px;height:25px;background:#858b8f"></div>
<div class="a" style="left:1845px;top:89px;width:1px;height:250px;background:#5f5f5f"></div>
<div class="a" style="left:1870px;top:89px;width:1px;height:250px;background:#5f5f5f"></div>
<div class="a" style="left:1896px;top:89px;width:1px;height:250px;background:#5f5f5f"></div>
<div class="dk" style="left:1632px;top:60px;width:40px"></div>
<svg class="i" style="left:1636px;top:62px" width="20" height="20"><rect x="1" y="1" width="9" height="3" fill="#e8a860"/><path d="M3 4V16H8M3 10H8" fill="none" stroke="#ccc"/><rect x="8" y="8" width="9" height="3" fill="#ddd"/><rect x="8" y="14" width="9" height="3" fill="#ddd"/></svg>
<svg class="i" style="left:1660px;top:65px" width="8" height="15"><use href="#ud"/></svg>
<span class="t" style="left:1687px;top:65px">View</span>
<span class="t" style="left:1743px;top:65px">Search</span>
<div class="dk" style="left:1803px;top:60px;width:130px"></div>
<span class="t w" style="left:1813px;top:65px">All Scenes</span>
<svg class="i" style="left:1906px;top:56px" width="14" height="14"><use href="#hatch" transform="scale(-1 1) translate(-14 0)"/></svg>
<svg class="a" style="left:1622px;top:89px" width="298" height="160" viewBox="1622 89 298 160"><g stroke="#2e2e2e" fill="none"><path d="M1640 102H1660M1658.500 112V177H1680M1658 127H1672M1683 188V227H1700M1683 202H1695"/></g></svg>
<svg class="i" style="left:1628px;top:97px" width="11" height="11"><circle cx="5.500" cy="5.500" r="4.500" fill="#c8c8c8" stroke="#111" stroke-width="1.400"/><path d="M3 5.500H8" stroke="#111" stroke-width="1.400"/></svg>
<svg class="i" style="left:1653px;top:122px" width="11" height="11"><circle cx="5.500" cy="5.500" r="4.500" fill="#c8c8c8" stroke="#111" stroke-width="1.400"/><path d="M3 5.500H8M5.500 3V8" stroke="#111" stroke-width="1.400"/></svg>
<svg class="i" style="left:1653px;top:172px" width="11" height="11"><circle cx="5.500" cy="5.500" r="4.500" fill="#c8c8c8" stroke="#111" stroke-width="1.400"/><path d="M3 5.500H8" stroke="#111" stroke-width="1.400"/></svg>
<svg class="i" style="left:1678px;top:197px" width="11" height="11"><circle cx="5.500" cy="5.500" r="4.500" fill="#c8c8c8" stroke="#111" stroke-width="1.400"/><path d="M3 5.500H8M5.500 3V8" stroke="#111" stroke-width="1.400"/></svg>
<svg class="i" style="left:1678px;top:222px" width="11" height="11"><circle cx="5.500" cy="5.500" r="4.500" fill="#c8c8c8" stroke="#111" stroke-width="1.400"/><path d="M3 5.500H8M5.500 3V8" stroke="#111" stroke-width="1.400"/></svg>
<div class="a" style="left:1648px;top:91px;width:22px;height:22px;border-radius:50%;background:#a8aeb2"></div>
<svg class="i" style="left:1650px;top:92px" width="19" height="19"><use href="#sc"/></svg>
<span class="t" style="left:1674px;top:95px">Scene</span>
<svg class="i" style="left:1674px;top:117px" width="20" height="20"><use href="#rl"/></svg>
<span class="t" style="left:1699px;top:120px">RenderLayers</span>
<div class="a" style="left:1800px;top:120px;width:3px;height:14px;background:#444"></div>
<div class="a" style="left:1815px;top:116px;width:22px;height:22px;border-radius:50%;background:#8a8a8a"></div>
<svg class="i" style="left:1816px;top:117px" width="20" height="20"><use href="#rl"/></svg>
<div class="a" style="left:1673px;top:141px;width:22px;height:22px;border-radius:50%;background:#9aa0aa"></div>
<svg class="i" style="left:1675px;top:143px" width="18" height="18"><use href="#world"/></svg>
<span class="t" style="left:1699px;top:145px">World</span>
<svg class="i" style="left:1675px;top:168px" width="18" height="18"><use href="#otri"/></svg>
<span class="t" style="left:1699px;top:170px">metal</span>
<svg class="i" style="left:1849px;top:171px" width="19" height="13"><use href="#eye"/></svg>
<svg class="i" style="left:1879px;top:168px" width="12" height="18"><use href="#cur"/></svg>
<svg class="i" style="left:1900px;top:169px" width="17" height="16"><use href="#cam"/></svg>
<svg class="i" style="left:1700px;top:193px" width="18" height="18"><use href="#mesh"/></svg>
<span class="t" style="left:1724px;top:195px">metal</span>
<div class="a" style="left:1773px;top:195px;width:3px;height:14px;background:#444"></div>
<svg class="i" style="left:1789px;top:193px" width="18" height="18"><use href="#ball"/></svg>
<div class="a" style="left:1698px;top:217px;width:22px;height:22px;border-radius:50%;background:#a07048"></div>
<svg class="i" style="left:1700px;top:218px" width="18" height="18"><use href="#otri"/></svg>
<span class="t" style="left:1724px;top:220px;color:#f4f4f4">glass</span>
<div class="a" style="left:1769px;top:220px;width:3px;height:14px;background:#444"></div>
<svg class="i" style="left:1785px;top:218px;opacity:.55" width="18" height="18"><use href="#mesh"/></svg>
<svg class="i" style="left:1849px;top:221px" width="19" height="13"><use href="#eye"/></svg>
<svg class="i" style="left:1879px;top:218px" width="12" height="18"><use href="#cur"/></svg>
<svg class="i" style="left:1900px;top:219px" width="17" height="16"><use href="#cam"/></svg>
<div class="a" style="left:1627px;top:342px;width:287px;height:16px;background:#626262;border-radius:8px"></div>
<div class="a" style="left:1627px;top:342px;width:227px;height:16px;background:linear-gradient(#a6a6a6,#777);border-radius:8px;border:1px solid #555"></div>
<svg class="i" style="left:1622px;top:348px" width="14" height="14"><use href="#hatch"/></svg>
<div class="a" style="left:1622px;top:362px;width:298px;height:2px;background:#1e1e1e"></div>

<!-- properties -->
<div class="a" style="left:1622px;top:364px;width:298px;height:678px;background:#727272"></div>
<div class="a" style="left:1622px;top:396px;width:298px;height:1px;background:#626262"></div>
<div class="dk" style="left:1632px;top:368px;width:40px"></div>
<svg class="i" style="left:1636px;top:372px" width="20" height="17"><rect x="1" y="2" width="17" height="6" rx="3" fill="#ddd" stroke="#111"/><rect x="1" y="10" width="17" height="6" rx="3" fill="#ddd" stroke="#111"/></svg>
<svg class="i" style="left:1660px;top:373px" width="8" height="15"><use href="#ud"/></svg>
<div class="a" style="left:1682px;top:368px;width:238px;height:25px;background:linear-gradient(#5e5e5e,#484848);border:1px solid #2c2c2c;border-radius:6px 0 0 6px"></div>
<div class="a" style="left:1782px;top:368px;width:25px;height:25px;background:#5680c2"></div>
<div class="a" style="left:1707px;top:369px;width:1px;height:23px;background:#222"></div><div class="a" style="left:1732px;top:369px;width:1px;height:23px;background:#222"></div><div class="a" style="left:1757px;top:369px;width:1px;height:23px;background:#222"></div><div class="a" style="left:1807px;top:369px;width:1px;height:23px;background:#222"></div><div class="a" style="left:1832px;top:369px;width:1px;height:23px;background:#222"></div><div class="a" style="left:1857px;top:369px;width:1px;height:23px;background:#222"></div><div class="a" style="left:1882px;top:369px;width:1px;height:23px;background:#222"></div><div class="a" style="left:1907px;top:369px;width:1px;height:23px;background:#222"></div>
<svg class="i" style="left:1686px;top:372px;opacity:.6" width="18" height="16"><use href="#cam"/></svg>
<svg class="i" style="left:1710px;top:371px;opacity:.75" width="19" height="19"><use href="#rl"/></svg>
<svg class="i" style="left:1735px;top:371px;opacity:.75" width="19" height="19"><use href="#sc"/></svg>
<svg class="i" style="left:1761px;top:372px;opacity:.75" width="18" height="18"><use href="#world"/></svg>
<svg class="i" style="left:1785px;top:371px" width="19" height="19"><use href="#cube"/></svg>
<svg class="i" style="left:1811px;top:372px" width="18" height="18"><path d="M7 10L3 14Q1 16 3 17Q5 18 7 16L10 13M11 8L14 4Q16 2 17 4Q18 6 16 8L13 11M7 12L13 6" fill="none" stroke="#a8a8a8" stroke-width="1.500"/></svg>
<svg class="i" style="left:1836px;top:372px" width="18" height="18"><path d="M3 16L11 8Q10 3 14 2L16 2L13 5L15 7L18 4Q18 9 13 10L5 18Z" fill="#7fa0d0" stroke="#222"/></svg>
<svg class="i" style="left:1861px;top:372px" width="18" height="18"><use href="#mesh"/></svg>
<svg class="i" style="left:1886px;top:372px" width="18" height="18"><use href="#ball"/></svg>
<svg class="i" style="left:1910px;top:372px" width="10" height="18"><path d="M0 2H5V7H0ZM5 7H10V12H5ZM0 12H5V17H0Z" fill="#c05050"/><path d="M5 2H10V7H5ZM0 7H5V12H0ZM5 12H10V17H5Z" fill="#e8e8e8"/></svg>
<svg class="i" style="left:1906px;top:364px" width="14" height="14"><use href="#hatch" transform="scale(-1 1) translate(-14 0)"/></svg>
<div class="a" style="left:1898px;top:402px;width:17px;height:633px;background:#636363;border-radius:8px"></div>
<div class="a" style="left:1898px;top:402px;width:17px;height:415px;background:linear-gradient(90deg,#666,#858585);border-radius:8px;border:1px solid #5a5a5a"></div>

<svg class="i" style="left:1634px;top:410px" width="19" height="19"><path d="M2 18L8 11M6 7L13 14M9 5L15 11L18 7L13 2Z" fill="#ddd" stroke="#222"/></svg>
<svg class="i" style="left:1659px;top:409px" width="19" height="19"><use href="#sc"/></svg>
<div class="a" style="left:1687px;top:415px;width:0;height:0;border-top:4px solid transparent;border-bottom:4px solid transparent;border-left:5px solid #3a3a3a"></div>
<svg class="i" style="left:1710px;top:409px" width="18" height="18"><use href="#cube"/></svg>
<span class="t" style="left:1735px;top:412px">glass</span>
<div class="fl" style="left:1640px;top:452px;width:248px;border:1px solid #3a3a3a;border-radius:6px"></div>
<div class="dk" style="left:1631px;top:452px;width:40px;border-radius:6px 0 0 6px"></div>
<svg class="i" style="left:1637px;top:455px" width="18" height="18"><use href="#cube"/></svg>
<svg class="i" style="left:1659px;top:457px" width="8" height="15"><use href="#ud"/></svg>
<span class="t" style="left:1679px;top:457px">glass</span>
<div class="sep" style="left:1626px;top:486px;width:268px"></div>
<div class="d" style="left:1636px;top:495px"></div>
<span class="t h" style="left:1651px;top:493px">Transform</span>
<svg class="i" style="left:1873px;top:497px" width="15" height="8"><use href="#dots"/></svg>
<span class="t" style="left:1640px;top:531px">Location:</span>
<span class="t" style="left:1729px;top:531px">Rotation:</span>
<span class="t" style="left:1818px;top:531px">Scale:</span>
<div class="num" style="left:1632px;top:551px;width:78px"><div class="r p"><span>X: 0m</span></div><div class="r p"><span>Y: 0m</span></div><div class="r p"><span>Z: 0m</span></div></div>
<div class="num" style="left:1721px;top:551px;width:78px"><div class="r p"><span style="width:24px">X:</span><span>0°</span></div><div class="r p"><span style="width:24px">Y:</span><span>0°</span></div><div class="r p"><span style="width:24px">Z:</span><span>0°</span></div></div>
<div class="num" style="left:1810px;top:551px;width:78px"><div class="r c"><span>1.000</span></div><div class="r c"><span>1.000</span></div><div class="r c"><span>1.000</span></div></div>
<span class="t" style="left:1640px;top:637px">Rotation ...</span>
<div class="dk" style="left:1723px;top:632px;width:165px"></div>
<span class="t w" style="left:1732px;top:637px">XYZ Euler</span>
<svg class="i" style="left:1876px;top:637px" width="8" height="15"><use href="#ud"/></svg>
<div class="sep" style="left:1626px;top:666px;width:268px"></div>
<div class="rt" style="left:1636px;top:676px"></div>
<span class="t h" style="left:1651px;top:673px">Delta Transform</span>
<svg class="i" style="left:1873px;top:677px" width="15" height="8"><use href="#dots"/></svg>
<div class="sep" style="left:1626px;top:694px;width:268px"></div>
<div class="rt" style="left:1636px;top:705px"></div>
<span class="t h" style="left:1651px;top:702px">Transform Locks</span>
<svg class="i" style="left:1873px;top:706px" width="15" height="8"><use href="#dots"/></svg>
<div class="sep" style="left:1626px;top:723px;width:268px"></div>
<div class="d" style="left:1636px;top:733px"></div>
<span class="t h" style="left:1651px;top:731px">Relations</span>
<svg class="i" style="left:1873px;top:735px" width="15" height="8"><use href="#dots"/></svg>
<span class="t" style="left:1640px;top:769px">Layers:</span>
<span class="t" style="left:1773px;top:769px">Parent:</span>
<div class="g" style="left:1632px;top:791px;width:57px;height:35px"><i style="background:#5e5e5e"></i><i></i><i></i><i></i><i></i><i></i><i></i><i></i><i></i><i></i></div>
<div class="g" style="left:1695px;top:791px;width:59px;height:35px"><i></i><i></i><i></i><i></i><i></i><i></i><i></i><i></i><i></i><i></i></div>
<div class="fl" style="left:1764px;top:791px;width:124px;border:1px solid #3a3a3a;border-radius:6px"></div>
<svg class="i" style="left:1771px;top:794px" width="18" height="18"><use href="#cube"/></svg>
<span class="t" style="left:1793px;top:796px">metal</span>
<svg class="i" style="left:1869px;top:795px" width="14" height="14"><use href="#x"/></svg>
<div class="dk" style="left:1764px;top:817px;width:124px"></div>
<span class="t w" style="left:1773px;top:822px">Object</span>
<svg class="i" style="left:1876px;top:822px" width="8" height="15"><use href="#ud"/></svg>
<div class="num" style="left:1632px;top:838px;width:122px;border-radius:12px"><div class="r c" style="height:23px"><span>Pass Index:0</span></div></div>
<div class="sep" style="left:1626px;top:872px;width:268px"></div>
<div class="d" style="left:1636px;top:881px"></div>
<span class="t h" style="left:1651px;top:879px">Groups</span>
<svg class="i" style="left:1873px;top:883px" width="15" height="8"><use href="#dots"/></svg>
<div class="bt" style="left:1632px;top:912px;width:256px"></div>
<div class="a" style="left:1862px;top:913px;width:1px;height:23px;background:#333"></div>
<span class="t" style="left:1704px;top:917px">Add to Group</span>
<svg class="i" style="left:1867px;top:917px" width="15" height="15"><use href="#plus"/></svg>
<div class="sep" style="left:1626px;top:946px;width:268px"></div>
<div class="d" style="left:1636px;top:956px"></div>
<span class="t h" style="left:1651px;top:954px">Display</span>
<svg class="i" style="left:1873px;top:958px" width="15" height="8"><use href="#dots"/></svg>
<div class="ck" style="left:1635px;top:989px"></div>
<span class="t" style="left:1661px;top:991px">Name</span>
<div class="ck" style="left:1768px;top:989px"></div>
<span class="t" style="left:1794px;top:991px">Bo</span>
<div class="dk" style="left:1831px;top:985px;width:57px;background:#626262;border-color:#555"></div>
<span class="t" style="left:1840px;top:990px;color:#9a9a9a">Box</span>
<svg class="i" style="left:1876px;top:990px;opacity:.7" width="8" height="15"><use href="#ud"/></svg>
<div class="ck" style="left:1635px;top:1016px"></div>
<span class="t" style="left:1661px;top:1018px">Axis</span>
<div class="ck" style="left:1768px;top:1016px"></div>
<span class="t" style="left:1794px;top:1018px">Texture Spa...</span>
<svg class="i" style="left:1622px;top:1028px" width="14" height="14"><use href="#hatch"/></svg>
</body></html>
